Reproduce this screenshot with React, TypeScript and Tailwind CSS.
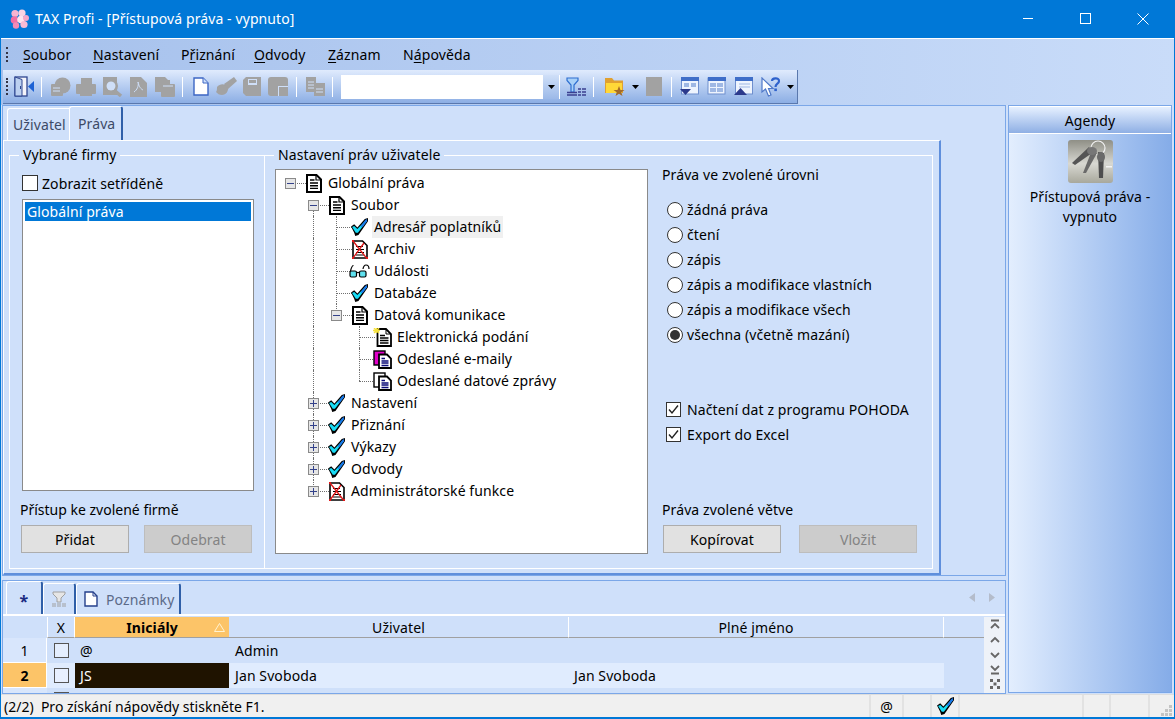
import React from 'react';

const font = "font-['Noto_Sans','Liberation_Sans',sans-serif]";

// ---- icons ----
const Flower = () => (
  <svg width="20" height="20" viewBox="0 0 20 20">
    <circle cx="5" cy="4.5" r="3.6" fill="#f7b4d0" />
    <circle cx="12" cy="4" r="3.6" fill="#fbd3e3" />
    <circle cx="4.5" cy="11" r="3.8" fill="#f06fa5" />
    <circle cx="11" cy="10.5" r="3.8" fill="#fde4ee" />
    <circle cx="16" cy="9" r="3" fill="#f7a6c8" />
    <circle cx="6" cy="16.5" r="3.2" fill="#f48ab6" />
    <circle cx="14" cy="15.5" r="3.6" fill="#f8bcd5" />
  </svg>
);

const Doc = () => (
  <svg width="16" height="19" viewBox="0 0 16 19">
    <path d="M1 1H10.5L15 5.5V18H1Z" fill="#fff" stroke="#000" strokeWidth="2" />
    <path d="M10 1V6H15" fill="none" stroke="#000" strokeWidth="1.2" />
    <path d="M4 6H8.5M4 9H12M4 11.7H12M4 14.4H12" stroke="#000" strokeWidth="1.4" />
  </svg>
);

const Check = () => (
  <svg width="17" height="18" viewBox="0 0 16 17">
    <path d="M0 8L3 6L6 9L13 1L16 0V3L7 16L4 17L3 14Z" fill="#000" />
    <path d="M1 8.5L3 7.5L6 10.5L13 3L14.5 3.5L6.5 14L4.5 14Z" fill="#18dcf6" />
    <path d="M9 8L13.5 1.8L15 1L15 3L11 8.5Z" fill="#1a78ea" />
  </svg>
);

const Archive = () => (
  <svg width="16" height="19" viewBox="0 0 16 19">
    <path d="M1 1H10.5L15 5.5V18H1Z" fill="#fff" stroke="#000" strokeWidth="1.6" />
    <path d="M4 6.5H11M4 9.5H12M4 12.5H12M4 15H12" stroke="#000" strokeWidth="1.2" />
    <path d="M1 1L14.5 18M12 3L1 18" stroke="#e01818" strokeWidth="1.3" />
    <rect x="0" y="0" width="2" height="2" fill="#e01818" />
    <rect x="0" y="17" width="2" height="2" fill="#e01818" />
    <rect x="14" y="17" width="2" height="2" fill="#e01818" />
  </svg>
);

const Glasses = () => (
  <svg width="21" height="14" viewBox="0 0 21 14">
    <path d="M4.5 1.5C3 1.5 2.5 3 1.5 7M14 5C14.5 2 16 1 17 1C19 1 20 2.5 20 5" fill="none" stroke="#000" strokeWidth="1.2" />
    <rect x="1" y="7" width="6.5" height="6" rx="1.5" fill="#5fe0ee" stroke="#000" strokeWidth="1.2" />
    <rect x="10.5" y="7" width="6.5" height="6" rx="1.5" fill="#5fe0ee" stroke="#000" strokeWidth="1.2" />
    <path d="M7.5 8.5H10.5" stroke="#000" strokeWidth="1.2" />
  </svg>
);

const SparkDoc = () => (
  <svg width="19" height="19" viewBox="0 0 19 19">
    <path d="M4.5 1H13L18 6V18H4.5Z" fill="#fff" stroke="#000" strokeWidth="1.8" />
    <path d="M13 1V6H18" fill="none" stroke="#000" />
    <path d="M7 7.5H12M7 10H15.5M7 12.5H15.5M7 15H15.5" stroke="#000" strokeWidth="1.3" />
    <path d="M0 2.5H7M3.5 0V5M1 0L6 5M6 0L1 5" stroke="#f6e23c" strokeWidth="1.3" />
  </svg>
);

const StackDoc = ({ back }: { back: string }) => (
  <svg width="19" height="19" viewBox="0 0 19 19">
    <rect x="1" y="1" width="11" height="14" fill={back} stroke="#000" strokeWidth="1.4" />
    <path d="M6 4.5H14L18 8.5V18H6Z" fill="#fff" stroke="#000" strokeWidth="1.8" />
    <path d="M8.5 8.5H12M8.5 11H15.5M8.5 13H15.5M8.5 15.5H15.5" stroke="#0a0a78" strokeWidth="1.4" />
  </svg>
);

const Door = () => (
  <svg width="21" height="21" viewBox="0 0 21 21">
    <rect x="1" y="1" width="12" height="19" fill="#f4f4fa" stroke="#2f4690" strokeWidth="1.3" />
    <path d="M1 1L8 3.5V20H1Z" fill="#bcd0f0" stroke="#2f4690" />
    <rect x="6" y="10" width="1" height="3" fill="#2f4690" />
    <path d="M14 10.5L20 5V16Z" fill="#1d62d4" />
  </svg>
);

const g = '#a2a2a2';
const GrayIcon = ({ kind }: { kind: number }) => (
  <svg width="21" height="20" viewBox="0 0 21 20" fill={g}>
    {kind === 0 && <><circle cx="12.5" cy="8.5" r="8" /><rect x="1" y="7" width="12" height="12" rx="1" /><path d="M3 11H10M3 14H10" stroke="#cfdff8" /></>}
    {kind === 1 && <><rect x="5" y="1" width="11" height="8" /><rect x="0" y="7" width="20" height="10" rx="1" /><rect x="4" y="14" width="12" height="5" /></>}
    {kind === 2 && <><path d="M1 0H15V18H1Z" /><circle cx="9" cy="9" r="4.5" fill="#cfdff8" /><circle cx="9" cy="9" r="6" fill="none" stroke={g} strokeWidth="2" /><path d="M12 13L19 19" stroke={g} strokeWidth="3.4" /></>}
    {kind === 3 && <><path d="M2 0H13L19 6V20H2Z" /><path d="M6 15C9 13 11 9 10 5C11 10 13 12 15 13" stroke="#cfdff8" fill="none" /></>}
    {kind === 4 && <><path d="M1 0H11L15 4V15H1Z" /><rect x="7" y="7" width="14" height="13" rx="1" /><rect x="11" y="3" width="5" height="5" /><path d="M9 9H19" stroke="#cfdff8" /></>}
    {kind === 5 && <><path d="M0 3L3 0H18V19H3L0 16Z" /><rect x="5" y="2" width="9" height="6" fill="#cfdff8" /><rect x="6" y="3" width="7" height="3" /></>}
    {kind === 6 && <><rect x="0" y="0" width="20" height="19" rx="3" /><rect x="10" y="9" width="10" height="10" fill="#cfdff8" /><rect x="11" y="10" width="9" height="9" /></>}
    {kind === 7 && <><path d="M1 0H11V15H1Z" /><path d="M3 5H9M3 8H9M3 11H9" stroke="#cfdff8" /><rect x="9" y="6" width="11" height="13" /><path d="M11 12H18M11 15H18" stroke="#cfdff8" /></>}
    {kind === 8 && <><path d="M1 10C4 6 9 7 12 9C13 14 10 18 6 18C3 18 2 17 0 15C1 14 1 12 1 10Z" /><path d="M8 7L18 0L21 4L12 12Z" /></>}
  </svg>
);

const NewDoc = () => (
  <svg width="16" height="19" viewBox="0 0 16 19">
    <path d="M1 1H10L15 6V18H1Z" fill="#fff" stroke="#3c66c4" strokeWidth="1.4" />
    <path d="M10 1V6H15" fill="#cfe0fa" stroke="#3c66c4" />
  </svg>
);

const FilterBars = () => (
  <svg width="21" height="19" viewBox="0 0 21 19">
    <path d="M1 1H12V3.5L8 8V15H5V8L1 3.5Z" fill="#a8d0f8" stroke="#2f6fd0" strokeWidth="1.2" />
    <path d="M1 15.5H11M1 18H11" stroke="#3b3f90" strokeWidth="1.6" />
    <path d="M12 12H15M16 12H20M12 15H15M16 15H20M12 18H15M16 18H20" stroke="#3b3f90" strokeWidth="1.6" />
  </svg>
);

const FolderStar = () => (
  <svg width="22" height="19" viewBox="0 0 22 19">
    <path d="M1 1H8L10 3.5H19V16H1Z" fill="#e0a030" />
    <rect x="2" y="6" width="16" height="10" fill="#ffd838" />
    <path d="M15 9L16.5 13H20.5L17.3 15.3L18.5 19L15 16.8L11.5 19L12.7 15.3L9.5 13H13.5Z" fill="#a36a28" />
  </svg>
);

const WinIcon = ({ kind }: { kind: number }) => (
  <svg width="19" height="19" viewBox="0 0 19 19">
    <rect x={kind === 1 ? 1 : 1.5} y="1" width="17" height="16" fill="#eef4fe" stroke="#6f8fce" />
    <rect x="1" y="0" width="18" height="4" fill="#3f6ec8" />
    {kind === 0 && <><rect x="4" y="6" width="5" height="4" fill="#9fb8e4" /><rect x="11" y="6" width="5" height="4" fill="#9fb8e4" /><path d="M0 12H11L5.5 18Z" fill="#2c3a8c" /></>}
    {kind === 1 && <><rect x="3" y="6" width="6" height="4" fill="#9fb8e4" /><rect x="10" y="6" width="6" height="4" fill="#9fb8e4" /><rect x="3" y="11" width="6" height="4" fill="#9fb8e4" /><rect x="10" y="11" width="6" height="4" fill="#9fb8e4" /></>}
    {kind === 2 && <><path d="M5 7H16M5 10H16" stroke="#9fb8e4" /><path d="M0 18L6.5 11L13 18Z" fill="#2c3a8c" /></>}
  </svg>
);

const HelpArrow = () => (
  <svg width="20" height="20" viewBox="0 0 20 20">
    <path d="M1 1V15L4.5 12L7.5 19L10 18L7.5 11.5H12Z" fill="#fff" stroke="#4f78c8" strokeWidth="1.2" />
    <path d="M11 4C11 1 18 0 18 4C18 7 14.5 6.5 14.5 10" fill="none" stroke="#2f62cc" strokeWidth="2.2" />
    <rect x="13.3" y="11.5" width="2.6" height="2.6" fill="#2f62cc" />
  </svg>
);

const Caret = () => (
  <svg width="7" height="4" viewBox="0 0 7 4"><path d="M0 0H7L3.5 4Z" fill="#000" /></svg>
);

const Keys = () => (
  <svg width="45" height="43" viewBox="0 0 45 43">
    <defs>
      <linearGradient id="keybg" x1="0" y1="0" x2="0" y2="1">
        <stop offset="0" stopColor="#8f8f86" />
        <stop offset=".55" stopColor="#d8d8d2" />
        <stop offset="1" stopColor="#a8a89c" />
      </linearGradient>
    </defs>
    <rect width="45" height="43" rx="3" fill="url(#keybg)" />
    <circle cx="30" cy="8" r="7" fill="none" stroke="#f2f2f2" strokeWidth="1.2" />
    <path d="M21 7L4 23L7 25L24 13Z" fill="#555" />
    <path d="M24 10L15 33L18 33L29 13Z" fill="#6a6a6a" />
    <path d="M30 12L31 38L35 38L36 13Z" fill="#4e4e4e" />
    <ellipse cx="24" cy="11" rx="5" ry="4" fill="#777" />
    <ellipse cx="33" cy="17" rx="4" ry="5" fill="#6a6a6a" />
    <rect x="38" y="26" width="6" height="1.5" fill="#f4f4f4" />
  </svg>
);

// ---- small controls ----
const WinBtn = ({ children, disabled }: { children: React.ReactNode; disabled?: boolean }) => (
  <div className={`h-[28px] flex items-center justify-center border ${disabled ? 'border-[#bdbdbd] bg-[#cccccc] text-[#838383]' : 'border-[#adadad] bg-[#e1e1e1] text-black'}`}>
    {children}
  </div>
);

const Radio = ({ label, on }: { label: string; on?: boolean }) => (
  <div className="h-[25px] flex items-center">
    <div className="ml-[5px] w-[16px] h-[16px] rounded-full border border-[#333] bg-white flex items-center justify-center">
      {on && <div className="w-[10px] h-[10px] rounded-full bg-[#333]" />}
    </div>
    <span className="ml-[4px]">{label}</span>
  </div>
);

const CheckBox = ({ label }: { label: string }) => (
  <div className="h-[25px] flex items-center">
    <div className="ml-[4px] w-[15px] h-[15px] border border-[#333] bg-white flex items-center justify-center">
      <svg width="11" height="11" viewBox="0 0 11 11"><path d="M1 5.5L4 9L10 1.5" fill="none" stroke="#222" strokeWidth="1.4" /></svg>
    </div>
    <span className="ml-[6px]">{label}</span>
  </div>
);

// ---- tree ----
type Cell = 'blank' | 'line' | 'tee' | 'ell' | 'plus' | 'plusEll' | 'minus' | 'minusEll' | 'dash';

const TreeCell = ({ kind }: { kind: Cell }) => {
  const full = kind === 'line' || kind === 'tee' || kind === 'plus';
  const half = kind === 'ell' || kind === 'minusEll' || kind === 'plusEll';
  const horiz = kind !== 'blank' && kind !== 'line';
  const box = kind === 'plus' || kind === 'plusEll' || kind === 'minus' || kind === 'minusEll' || kind === 'dash';
  const plus = kind === 'plus' || kind === 'plusEll';
  return (
    <div className="relative w-[23px] h-[22px] shrink-0">
      {full && <div className="absolute left-[11px] top-0 h-[22px] border-l border-dotted border-[#707070]" />}
      {half && <div className="absolute left-[11px] top-0 h-[11px] border-l border-dotted border-[#707070]" />}
      {kind === 'minus' && <div className="absolute left-[11px] top-[11px] h-[11px] border-l border-dotted border-[#707070]" />}
      {horiz && <div className="absolute left-[11px] top-[11px] w-[16px] border-t border-dotted border-[#707070]" />}
      {box && (
        <div className="absolute left-[6px] top-[6px] w-[11px] h-[11px] border border-[#8a8a8a] bg-[#e6e6e6] flex items-center justify-center">
          <div className="relative w-[7px] h-px bg-[#33418a]">
            {plus && <div className="absolute left-[3px] -top-[3px] w-px h-[7px] bg-[#33418a]" />}
          </div>
        </div>
      )}
    </div>
  );
};

const TreeRow = ({ cells, icon, label, hi }: { cells: Cell[]; icon: React.ReactNode; label: string; hi?: boolean }) => (
  <div className="h-[22px] flex items-center">
    {cells.map((c, i) => <TreeCell key={i} kind={c} />)}
    <div className="relative w-[23px] h-[22px] flex items-center justify-center shrink-0">{icon}</div>
    <span className={`ml-px px-[2px] h-[22px] leading-[22px] ${hi ? 'bg-[#f0f0f0]' : ''}`}>{label}</span>
  </div>
);

const Sep = ({ className }: { className: string }) => <div className={`w-px h-[20px] bg-white shrink-0 ${className}`} />;

const Row = ({ num, active, ini, user, name }: { num: string; active?: boolean; ini: string; user: string; name: string }) => (
  <div className="h-[25px] flex shrink-0">
    <div className={`w-[44px] flex items-center justify-center border-b border-r border-white ${active ? 'bg-[#fcc468] font-bold' : 'bg-[#d8e6fc]'}`}>{num}</div>
    <div className={`w-[28px] flex items-center justify-center ${active ? 'bg-[#e0ecfe]' : ''}`}>
      <div className={`w-[15px] h-[15px] border border-[#555] ${active ? 'bg-[#e8f0ff]' : 'bg-[#e4eefe]'}`} />
    </div>
    <div className={`w-[154px] pl-[5px] flex items-center ${active ? 'bg-[#1f1300] text-white' : ''}`}>{ini}</div>
    <div className={`w-[340px] pl-[6px] flex items-center ${active ? 'bg-[#e0ecfe]' : ''}`}>{user}</div>
    <div className={`w-[375px] pl-[5px] flex items-center ${active ? 'bg-[#e0ecfe]' : ''}`}>{name}</div>
  </div>
);

const NavBtn = ({ d }: { d: string }) => (
  <svg width="14" height="14" viewBox="0 0 14 14"><path d={d} fill="none" stroke="#666" strokeWidth="1.8" /></svg>
);

const SBar = ({ w, children }: { w: string; children?: React.ReactNode }) => (
  <div className={`${w} h-full border-r-2 border-[#e2e2e2] flex items-center justify-center shrink-0`}>{children}</div>
);

export default function App() {
  return (
    <div className={`${font} tracking-[0.1px] w-[1175px] h-[719px] overflow-hidden flex flex-col bg-[#cfe0fa] text-[14px] text-black border-x border-[#0078d7]`}>
      {/* title bar */}
      <div className="h-[38px] bg-[#0078d7] flex items-center text-white shrink-0 border-b border-[#0078d7]">
        <div className="ml-[9px]"><Flower /></div>
        <span className="ml-[5px]">TAX Profi - [Přístupová práva - vypnuto]</span>
        <div className="ml-auto flex items-center pr-[3px]">
          <div className="w-[57px] flex justify-center"><div className="w-[10px] h-px bg-white" /></div>
          <div className="w-[58px] flex justify-center"><div className="w-[11px] h-[11px] border border-white" /></div>
          <div className="w-[57px] flex justify-center">
            <svg width="12" height="12" viewBox="0 0 12 12"><path d="M.5 .5L11.5 11.5M11.5 .5L.5 11.5" stroke="#fff" /></svg>
          </div>
        </div>
      </div>
      <div className="h-px bg-white shrink-0" />

      {/* menu + toolbar band */}
      <div className="h-[66px] shrink-0 bg-gradient-to-r from-[#a6c1ec] to-[#c9dcf9] flex flex-col">
        <div className="h-[31px] flex items-center shrink-0">
          <div className="ml-[5px] h-[15px] border-l-2 border-dotted border-[#334] " />
          <div className="ml-[15px] w-[70px]"><span className="underline underline-offset-2">S</span>oubor</div>
          <div className="w-[88px]"><span className="underline underline-offset-2">N</span>astavení</div>
          <div className="w-[73px]">P<span className="underline underline-offset-2">ř</span>iznání</div>
          <div className="w-[74px]"><span className="underline underline-offset-2">O</span>dvody</div>
          <div className="w-[75px]"><span className="underline underline-offset-2">Z</span>áznam</div>
          <div>N<span className="underline underline-offset-2">á</span>pověda</div>
        </div>
        <div className="ml-[2px] w-[795px] h-[34px] shrink-0 flex items-center bg-gradient-to-b from-[#e0ebfd] to-[#8caee4] border-b border-r border-[#5a78ad]">
          <div className="ml-[3px] h-[17px] border-l-2 border-dotted border-[#334]" />
          <div className="ml-[6px]"><Door /></div>
          <Sep className="ml-[6px]" />
          <div className="ml-[8px] flex gap-[5px]">
            {[0, 1, 2, 3, 4].map(k => <GrayIcon key={k} kind={k} />)}
          </div>
          <Sep className="ml-[7px]" />
          <div className="ml-[10px]"><NewDoc /></div>
          <div className="ml-[7px]"><GrayIcon kind={8} /></div>
          <div className="ml-[6px]"><GrayIcon kind={5} /></div>
          <div className="ml-[4px]"><GrayIcon kind={6} /></div>
          <Sep className="ml-[7px]" />
          <div className="ml-[8px]"><GrayIcon kind={7} /></div>
          <Sep className="ml-[6px]" />
          <div className="ml-[8px] w-[219px] h-[24px] bg-white flex justify-end shrink-0">
            <div className="w-[17px] h-full bg-gradient-to-b from-[#cfdff8] to-[#9cb9e8] flex items-center justify-center border-r border-white"><Caret /></div>
          </div>
          <div className="ml-[6px]"><FilterBars /></div>
          <Sep className="ml-[6px]" />
          <div className="ml-[10px]"><FolderStar /></div>
          <div className="ml-[6px]"><Caret /></div>
          <div className="ml-[7px] w-[16px] h-[19px] bg-[#a2a2a2]" />
          <Sep className="ml-[9px]" />
          <div className="ml-[8px]"><WinIcon kind={0} /></div>
          <div className="ml-[8px]"><WinIcon kind={1} /></div>
          <div className="ml-[8px]"><WinIcon kind={2} /></div>
          <div className="ml-[8px]"><HelpArrow /></div>
          <div className="ml-[6px]"><Caret /></div>
        </div>
      </div>

      {/* work area */}
      <div className="flex-1 flex min-h-0 pl-px pb-[1px]">
        <div className="w-[1004px] flex flex-col shrink-0">
          {/* upper panel */}
          <div className="h-[471px] border border-[#7ba7e8] flex flex-col shrink-0">
            <div className="h-[34px] flex items-end pl-[4px] shrink-0">
              <div className="w-[62px] h-[32px] border-l border-t border-white rounded-tl-[3px] pl-[5px] pt-[5px] text-[#3d4a66]">Uživatel</div>
              <div className="w-[54px] h-[34px] border-l border-t border-white border-r-2 border-r-[#2f5fa8] rounded-t-[3px] pl-[8px] pt-[6px] text-[#3d4a66]">Práva</div>
            </div>
            <div className="w-[938px] flex-1 border-l border-t border-white border-r-2 border-b-2 border-r-[#5f8fdc] border-b-[#5f8fdc] pl-[5px] pt-[4px] flex items-start min-h-0">
              <fieldset className="w-[255px] h-[424px] border border-r-0 border-white pl-[12px] shrink-0">
                <legend className="-ml-[3px] px-[4px] h-[20px] leading-[20px]">Vybrané firmy</legend>
                <div className="mt-[8px] h-[20px] flex items-center">
                  <div className="w-[16px] h-[16px] border border-[#333] bg-white" />
                  <span className="ml-[4px]">Zobrazit setříděně</span>
                </div>
                <div className="mt-[6px] w-[232px] h-[292px] border border-[#8a8a8a] bg-white p-[2px]">
                  <div className="h-[19px] leading-[19px] pl-[2px] bg-[#0078d7] text-white">Globální práva</div>
                </div>
                <div className="mt-[9px] h-[20px] leading-[20px] -ml-[2px] tracking-normal">Přístup ke zvolené firmě</div>
                <div className="mt-[5px] -ml-px flex gap-[15px]">
                  <div className="w-[108px]"><WinBtn>Přidat</WinBtn></div>
                  <div className="w-[108px]"><WinBtn disabled>Odebrat</WinBtn></div>
                </div>
              </fieldset>
              <fieldset className="w-[669px] h-[424px] border border-white pl-[10px] shrink-0">
                <legend className="-ml-px px-[4px] h-[20px] leading-[20px]">Nastavení práv uživatele</legend>
                <div className="flex">
                  <div className="mt-[4px] w-[373px] h-[385px] border border-[#8a8a8a] bg-white pl-[3px] pt-[2px] shrink-0 overflow-hidden">
                    <TreeRow cells={['dash']} icon={<Doc />} label="Globální práva" />
                    <TreeRow cells={['blank', 'minus']} icon={<Doc />} label="Soubor" />
                    <TreeRow cells={['blank', 'line', 'tee']} icon={<Check />} label="Adresář poplatníků" hi />
                    <TreeRow cells={['blank', 'line', 'tee']} icon={<Archive />} label="Archiv" />
                    <TreeRow cells={['blank', 'line', 'tee']} icon={<Glasses />} label="Události" />
                    <TreeRow cells={['blank', 'line', 'tee']} icon={<Check />} label="Databáze" />
                    <TreeRow cells={['blank', 'line', 'minusEll']} icon={<Doc />} label="Datová komunikace" />
                    <TreeRow cells={['blank', 'line', 'blank', 'tee']} icon={<SparkDoc />} label="Elektronická podání" />
                    <TreeRow cells={['blank', 'line', 'blank', 'tee']} icon={<StackDoc back="#e000c8" />} label="Odeslané e-maily" />
                    <TreeRow cells={['blank', 'line', 'blank', 'ell']} icon={<StackDoc back="#fff" />} label="Odeslané datové zprávy" />
                    <TreeRow cells={['blank', 'plus']} icon={<Check />} label="Nastavení" />
                    <TreeRow cells={['blank', 'plus']} icon={<Check />} label="Přiznání" />
                    <TreeRow cells={['blank', 'plus']} icon={<Check />} label="Výkazy" />
                    <TreeRow cells={['blank', 'plus']} icon={<Check />} label="Odvody" />
                    <TreeRow cells={['blank', 'plusEll']} icon={<Archive />} label="Administrátorské funkce" />
                  </div>
                  <div className="ml-[14px] flex-1">
                    <div className="h-[20px] leading-[20px]">Práva ve zvolené úrovni</div>
                    <div className="mt-[12px]">
                      <Radio label="žádná práva" />
                      <Radio label="čtení" />
                      <Radio label="zápis" />
                      <Radio label="zápis a modifikace vlastních" />
                      <Radio label="zápis a modifikace všech" />
                      <Radio label="všechna (včetně mazání)" on />
                    </div>
                    <div className="mt-[50px]">
                      <CheckBox label="Načtení dat z programu POHODA" />
                      <CheckBox label="Export do Excel" />
                    </div>
                    <div className="mt-[53px] h-[20px] leading-[20px]">Práva zvolené větve</div>
                    <div className="mt-[5px] ml-px flex gap-[18px]">
                      <div className="w-[118px]"><WinBtn>Kopírovat</WinBtn></div>
                      <div className="w-[118px]"><WinBtn disabled>Vložit</WinBtn></div>
                    </div>
                  </div>
                </div>
              </fieldset>
            </div>
          </div>

          {/* lower panel */}
          <div className="mt-[4px] h-[114px] border border-[#7ba7e8] flex flex-col overflow-hidden shrink-0">
            <div className="h-[35px] flex items-end pl-[3px] shrink-0 border-b-2 border-white">
              <div className="w-[37px] h-[33px] border-l border-t border-white border-r-2 border-r-[#2f5fa8] rounded-t-[3px] flex items-center justify-center text-[#1a2a80] text-[16px] font-bold pt-[5px]">*</div>
              <div className="w-[33px] h-[31px] border-l border-t border-white border-r-2 border-r-[#2f5fa8] rounded-t-[3px] flex items-center justify-center">
                <svg width="16" height="16" viewBox="0 0 16 16"><path d="M2 1H14V3L10 7V11H6V7L2 3Z" fill="#e6e6e6" stroke="#a0a0a0" /><path d="M1 13H15M1 15H15" stroke="#a0a0a0" strokeDasharray="4 1" /></svg>
              </div>
              <div className="w-[105px] h-[31px] border-l border-t border-white border-r-2 border-r-[#2f5fa8] rounded-t-[3px] flex items-center pl-[7px] text-[#5b6a88]">
                <svg width="14" height="16" viewBox="0 0 14 16"><path d="M1 1H9L13 5V15H1Z" fill="#fff" stroke="#26408c" strokeWidth="1.4" /><path d="M9 1V5H13" fill="none" stroke="#26408c" /></svg>
                <span className="ml-[8px]">Poznámky</span>
              </div>
              <div className="ml-auto h-[33px] flex items-center gap-[14px] pr-[10px]">
                <svg width="6" height="9" viewBox="0 0 6 9"><path d="M6 0V9L0 4.5Z" fill="#b4bccb" /></svg>
                <svg width="6" height="9" viewBox="0 0 6 9"><path d="M0 0V9L6 4.5Z" fill="#b4bccb" /></svg>
              </div>
            </div>
            <div className="flex-1 flex min-h-0 pt-[1px]">
              <div className="flex-1 flex flex-col min-w-0 overflow-hidden">
                <div className="h-[21px] flex shrink-0">
                  <div className="w-[44px] border-b border-r border-[#cfe0fa]" />
                  <div className="w-[28px] border-b border-[#a0a0a0] border-x border-x-white flex items-center justify-center">X</div>
                  <div className="w-[154px] bg-[#fcc468] border-b border-[#a0a0a0] flex items-center justify-center font-bold relative">
                    Iniciály
                    <svg className="absolute right-[4px] top-[6px]" width="11" height="9" viewBox="0 0 11 9"><path d="M5.5 .5L10.5 8.5H.5Z" fill="none" stroke="#fff2d0" /></svg>
                  </div>
                  <div className="w-[340px] border-b border-[#a0a0a0] border-r border-r-white flex items-center justify-center">Uživatel</div>
                  <div className="w-[375px] border-b border-[#a0a0a0] border-r border-r-white flex items-center justify-center">Plné jméno</div>
                  <div className="flex-1 border-b border-[#a0a0a0]" />
                </div>
                <Row num="1" ini="@" user="Admin" name="" />
                <Row num="2" active ini="JS" user="Jan Svoboda" name="Jan Svoboda" />
                <div className="h-[6px] flex shrink-0">
                  <div className="w-[44px] bg-[#d8e6fc]" />
                  <div className="w-[28px] flex justify-center pt-[4px]"><div className="w-[15px] h-[15px] border border-[#555]" /></div>
                </div>
              </div>
              <div className="w-[21px] bg-[#eef2f8] flex flex-col items-center gap-px pt-[1px] shrink-0">
                <NavBtn d="M3 2.5H11M3 10L7 6L11 10" />
                <NavBtn d="M3 9L7 5L11 9" />
                <NavBtn d="M3 5L7 9L11 5" />
                <NavBtn d="M3 3L7 7L11 3M3 10.5H11" />
                <svg width="12" height="12" viewBox="0 0 12 12" fill="#666"><rect x="1" y="1" width="3" height="3" /><rect x="8" y="1" width="3" height="3" /><rect x="4.5" y="4.5" width="3" height="3" /><rect x="1" y="8" width="3" height="3" /><rect x="8" y="8" width="3" height="3" /></svg>
              </div>
            </div>
          </div>
        </div>

        {/* agendy */}
        <div className="ml-[2px] w-[164px] border border-[#7ba7e8] bg-gradient-to-r from-[#e3eefe] to-[#85ace8] flex flex-col items-center shrink-0">
          <div className="w-full h-[28px] bg-gradient-to-b from-[#e6f0ff] to-[#8fafe4] border-b border-[#33507e] border-t border-white flex items-center justify-center">Agendy</div>
          <div className="mt-[6px]"><Keys /></div>
          <div className="mt-[4px] leading-[20px] text-center">Přístupová práva -<br />vypnuto</div>
        </div>
      </div>

      {/* status bar */}
      <div className="h-[25px] shrink-0 bg-[#f0f0f0] flex items-center border-t border-[#dedede] border-b-2 border-b-[#0078d7] relative">
        <div className="w-[870px] pl-[3px] border-r-2 border-[#e2e2e2] h-full flex items-center whitespace-pre shrink-0 tracking-normal">(2/2)  Pro získání nápovědy stiskněte F1.</div>
        <SBar w="w-[33px]">@</SBar>
        <SBar w="w-[28px]" />
        <SBar w="w-[28px]"><Check /></SBar>
        <SBar w="w-[124px]" />
        <SBar w="w-[27px]" />
        <SBar w="w-[39px]" />
        <svg className="absolute right-[1px] bottom-0" width="12" height="12" viewBox="0 0 12 12" fill="#c4c4c4"><rect x="8" y="0" width="3" height="3" /><rect x="4" y="4" width="3" height="3" /><rect x="8" y="4" width="3" height="3" /><rect x="0" y="8" width="3" height="3" /><rect x="4" y="8" width="3" height="3" /><rect x="8" y="8" width="3" height="3" /></svg>
      </div>
    </div>
  );
}
